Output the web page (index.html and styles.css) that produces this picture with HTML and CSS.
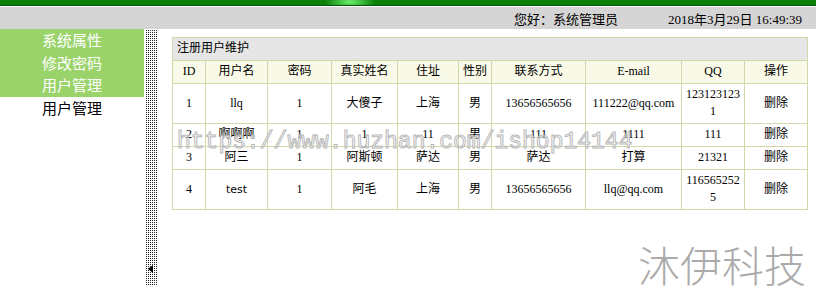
FILE: index.html
```html
<!DOCTYPE html>
<html lang="zh">
<head>
  <meta charset="UTF-8" />
  <meta name="viewport" content="width=device-width, initial-scale=1.0" />
  <title>注册用户维护</title>
  <link rel="stylesheet" href="styles.css">
</head>
<body>
  <div class="topbar"><span class="glow"></span></div>
  <div class="infobar">
    <span class="hello">您好：系统管理员</span>
    <span class="time">2018年3月29日 16:49:39</span>
  </div>

  <div class="main">
    <ul class="menu">
      <li class="on">系统属性</li>
      <li class="on">修改密码</li>
      <li class="on">用户管理</li>
      <li class="sub">用户管理</li>
    </ul>

    <div class="splitter"><span class="arrow"></span></div>

    <div class="content">
      <table>
        <colgroup>
          <col style="width:33px"><col style="width:62px"><col style="width:64px"><col style="width:66px"><col style="width:61px">
          <col style="width:33px"><col style="width:94px"><col style="width:96px"><col style="width:63px"><col style="width:63px">
        </colgroup>
        <tr class="caption"><td colspan="10">注册用户维护</td></tr>
        <tr class="head">
          <td>ID</td><td>用户名</td><td>密码</td><td>真实姓名</td><td>住址</td>
          <td>性别</td><td>联系方式</td><td>E-mail</td><td>QQ</td><td>操作</td>
        </tr>
        <tr>
          <td>1</td><td>llq</td><td>1</td><td>大傻子</td><td>上海</td>
          <td>男</td><td>13656565656</td><td>111222@qq.com</td><td>1231231231</td><td>删除</td>
        </tr>
        <tr>
          <td>2</td><td>啊啊啊</td><td>1</td><td>1</td><td>11</td>
          <td>男</td><td>111</td><td>1111</td><td>111</td><td>删除</td>
        </tr>
        <tr>
          <td>3</td><td>阿三</td><td>1</td><td>阿斯顿</td><td>萨达</td>
          <td>男</td><td>萨达</td><td>打算</td><td>21321</td><td>删除</td>
        </tr>
        <tr>
          <td>4</td><td class="sans">test</td><td>1</td><td>阿毛</td><td>上海</td>
          <td>男</td><td>13656565656</td><td>llq@qq.com</td><td>1165652525</td><td>删除</td>
        </tr>
      </table>
    </div>
  </div>

  <!-- watermarks from the screenshot -->
  <div class="mark">https://www.huzhan.com/ishop14144</div>
  <div class="logo">沐伊科技</div>
</body>
</html>
```

FILE: styles.css
```css
body {
  margin: 0;
  padding: 0;
  height: 100vh;
  overflow: hidden;
  background: white;
  color: black;
  font-family: "Liberation Serif", "Noto Sans CJK SC", serif;
}

.topbar {
  position: relative;
  height: 5px;
  background: #0b800b;
  border-bottom: 1px solid #06560a;
  overflow: hidden;
}

.glow {
  position: absolute;
  top: -6px;
  left: 325px;
  width: 50px;
  height: 16px;
  background: radial-gradient(closest-side, #6cf36c, rgba(11, 128, 11, 0));
}

.infobar {
  height: 22px;
  margin-top: 1px;
  background: #d5d5d5;
  display: flex;
  justify-content: flex-end;
  align-items: center;
  gap: 50px;
  padding-right: 14px;
  font-size: 13px;
}

.hello {
  font-family: "Noto Sans CJK SC", sans-serif;
}

.main {
  display: flex;
  height: calc(100vh - 29px);
}

.menu {
  list-style: none;
  margin: 0;
  padding: 0;
  width: 145px;
  font-family: "Noto Sans CJK SC", sans-serif;
  font-size: 15px;
}

.menu li {
  height: 22.5px;
  line-height: 22.5px;
  text-align: center;
}

.menu .on {
  background: #9ad36a;
  color: white;
}

.menu .sub {
  color: black;
}

.splitter {
  width: 12px;
  margin-left: 1px;
  background:
    linear-gradient(90deg, white 1px, transparent 1px) 0 0 / 2px 2px,
    linear-gradient(white 1px, #222 1px) 0 0 / 2px 2px;
  display: flex;
  flex-direction: column;
  justify-content: flex-end;
  padding-bottom: 13px;
  box-sizing: border-box;
}

.arrow {
  width: 0;
  height: 0;
  margin-left: 3px;
  border-right: 5px solid black;
  border-top: 4px solid transparent;
  border-bottom: 4px solid transparent;
}

.content {
  flex: 1;
  padding: 8px 8px 0 15px;
}

table {
  width: 635px;
  table-layout: fixed;
  border-collapse: collapse;
  font-size: 12px;
}

td {
  border: 1px solid #d3d8aa;
  text-align: center;
  vertical-align: middle;
  line-height: 17px;
  padding: 2px 3px 3px;
  word-break: break-all;
}

.caption td {
  background: #e6e6e6;
  text-align: left;
  padding-left: 4px;
}

.head td {
  background: #f9f9e7;
}

.sans {
  font-family: "DejaVu Sans", sans-serif;
  font-size: 11px;
}

.mark {
  position: absolute;
  top: 131px;
  left: 177px;
  font-family: "Liberation Mono", monospace;
  font-size: 23px;
  line-height: 1;
  color: rgba(255, 255, 255, 0.45);
  -webkit-text-stroke: 1px #b9b9b9;
  pointer-events: none;
}

.logo {
  position: absolute;
  top: 243px;
  left: 638px;
  font-family: "Noto Sans CJK SC", sans-serif;
  font-weight: 300;
  font-size: 42px;
  line-height: 1;
  color: #ababab;
  pointer-events: none;
}
```
